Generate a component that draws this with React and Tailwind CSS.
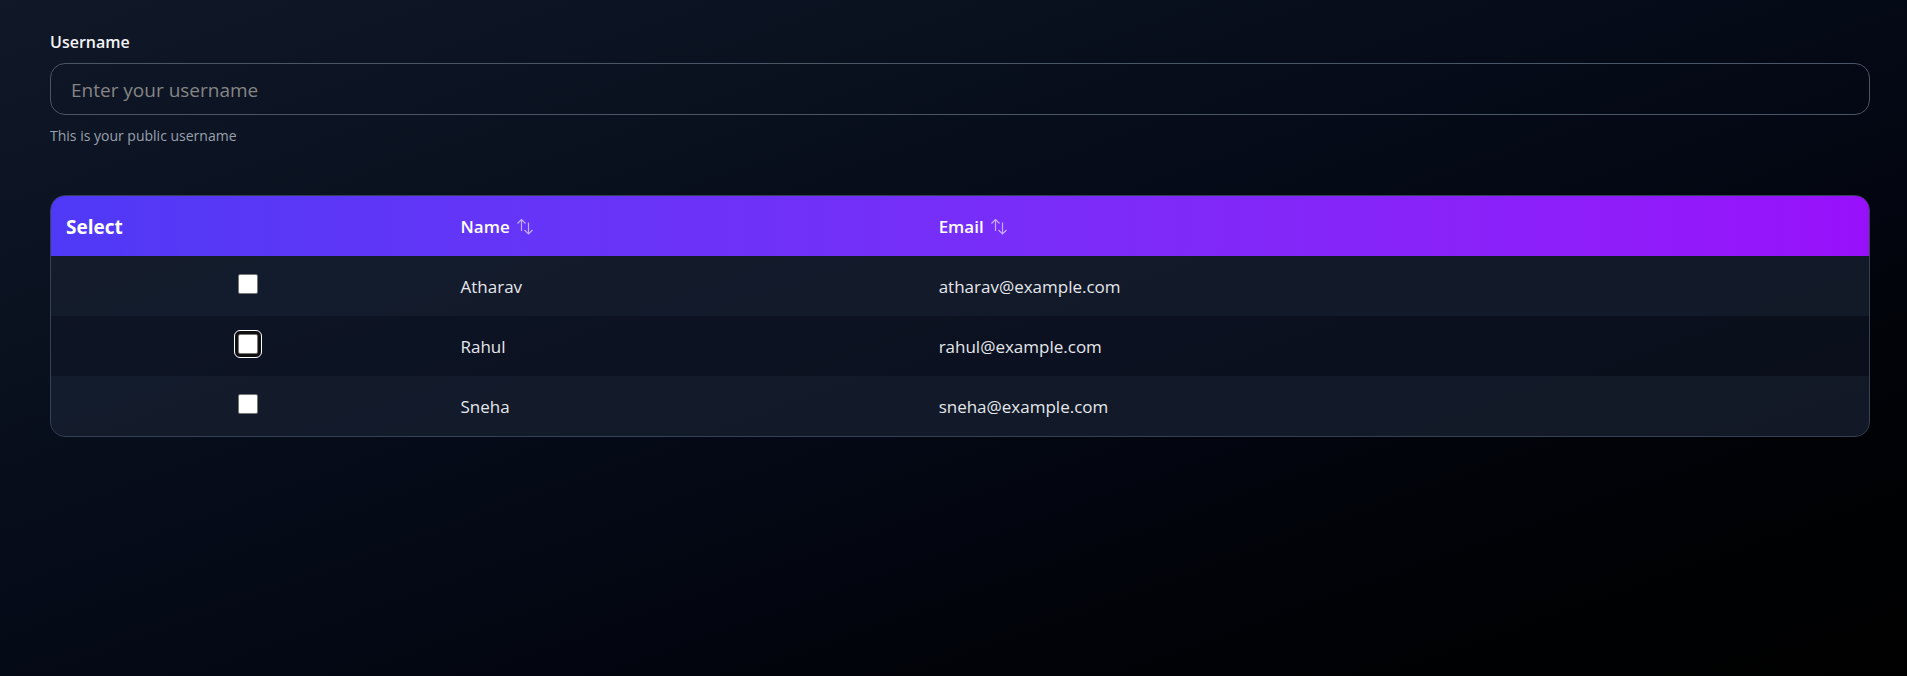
import { useState } from "react";

const USERS = [
  { id: 1, name: "Atharav", email: "atharav@example.com" },
  { id: 2, name: "Rahul", email: "rahul@example.com" },
  { id: 3, name: "Sneha", email: "sneha@example.com" },
];

function SortIcon() {
  return (
    <svg
      className="h-4 w-4 shrink-0 opacity-60"
      viewBox="0 0 16 16"
      fill="none"
      stroke="currentColor"
      strokeWidth="1.2"
      aria-hidden="true"
    >
      <path d="M4.5 12V0.5M0.5 4.5L4.5 0.5L8.5 4.5" />
      <path d="M11.5 3.5V15M7.5 11L11.5 15L15.5 11" />
    </svg>
  );
}

function SortHeader({ label, active, onSort }) {
  return (
    <th scope="col" className="px-[15px] pt-4 pb-[14px] text-left" aria-sort={active ? "ascending" : "none"}>
      <button type="button" onClick={onSort} className="flex items-center gap-[7px] text-[17px] leading-[30px] font-semibold">
        {label}
        <SortIcon />
      </button>
    </th>
  );
}

export default function App() {
  const [selected, setSelected] = useState([]);
  const [sortKey, setSortKey] = useState(null);

  const rows = sortKey ? [...USERS].sort((a, b) => a[sortKey].localeCompare(b[sortKey])) : USERS;
  const toggle = (id) =>
    setSelected((ids) => (ids.includes(id) ? ids.filter((x) => x !== id) : [...ids, id]));

  return (
    <main className="min-h-screen bg-linear-to-br from-gray-900 via-gray-950 via-60% to-black to-120% py-[30px] pr-[37px] pl-[50px] font-['Open_Sans','Noto_Sans',sans-serif] text-white">
      <div className="flex flex-col">
        <label htmlFor="username" className="text-base leading-6 font-semibold text-gray-100">
          Username
        </label>
        <input
          id="username"
          type="text"
          placeholder="Enter your username"
          aria-describedby="username-help"
          className="mt-[9px] h-[52px] w-full rounded-[15px] border border-gray-600 bg-transparent px-5 pt-[2px] text-[19px] placeholder:text-[#858585]"
        />
        <p id="username-help" className="mt-[9px] text-sm leading-6 text-gray-400">
          This is your public username
        </p>
      </div>

      <div className="mt-[47px] overflow-hidden rounded-[15px] border border-gray-700 bg-gray-900/60">
        <table className="w-full table-fixed border-collapse">
          <colgroup>
            <col className="w-[21.7%]" />
            <col className="w-[26.3%]" />
            <col />
          </colgroup>
          <thead className="bg-linear-to-r from-indigo-600 to-purple-600">
            <tr>
              <th scope="col" className="px-[15px] pt-4 pb-[14px] text-left text-[19px] leading-[30px] font-bold">
                Select
              </th>
              <SortHeader label="Name" active={sortKey === "name"} onSort={() => setSortKey("name")} />
              <SortHeader label="Email" active={sortKey === "email"} onSort={() => setSortKey("email")} />
            </tr>
          </thead>
          <tbody className="text-[17px] leading-[30px] text-gray-200">
            {rows.map((user) => (
              <tr key={user.id} className="odd:bg-gray-800/40">
                <td className="px-[15px] pt-[13px] pb-[17px]">
                  <input
                    type="checkbox"
                    autoFocus={user.id === 2}
                    aria-label={`Select ${user.name}`}
                    checked={selected.includes(user.id)}
                    onChange={() => toggle(user.id)}
                    className="mx-auto block h-5 w-5 appearance-none rounded-[2px] border border-[#767676] bg-white outline-offset-3 outline-white checked:border-4 checked:border-white checked:bg-blue-600 focus-visible:ring-3 focus-visible:ring-[#101010] focus-visible:outline-1"
                  />
                </td>
                <td className="px-[15px] pt-4 pb-[14px]">{user.name}</td>
                <td className="px-[15px] pt-4 pb-[14px]">{user.email}</td>
              </tr>
            ))}
          </tbody>
        </table>
      </div>
    </main>
  );
}
